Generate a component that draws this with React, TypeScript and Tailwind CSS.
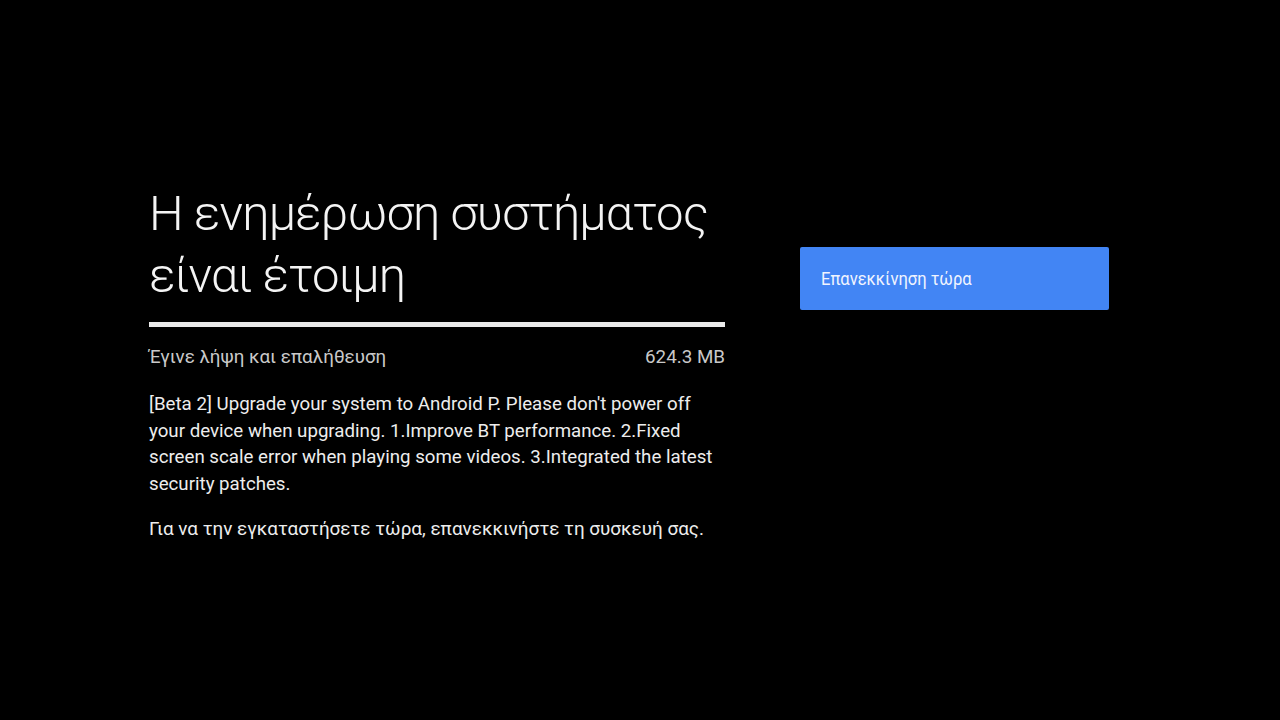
import React from "react";

export default function App() {
  return (
    <div className="w-[1280px] h-[720px] bg-black flex" style={{ fontFamily: "Roboto, 'Noto Sans', sans-serif" }}>
      <div className="flex flex-row pl-[149px] pt-[183px] gap-[75px]">
        <div className="w-[576px] flex flex-col">
          <h1 className="text-[49px] leading-[62px] text-[#f4f4f4] font-light tracking-[-0.9px] whitespace-nowrap" style={{ fontFamily: "Roboto, sans-serif" }}>
            Η ενημέρωση συστήματος
            <br />
            είναι έτοιμη
          </h1>
          <div className="mt-[15px] h-[5px] w-full bg-[#ebebeb]" />
          <div className="mt-[17px] flex justify-between text-[18.8px] leading-[26px] text-[#c9c9c9]">
            <span>Έγινε λήψη και επαλήθευση</span>
            <span>624.3 MB</span>
          </div>
          <p className="mt-[21px] text-[18.7px] leading-[26.7px] text-[#ededed]">
            [Beta 2] Upgrade your system to Android P. Please don't power off your device when upgrading. 1.Improve BT performance. 2.Fixed screen scale error when playing some videos. 3.Integrated the latest security patches.
          </p>
          <p className="mt-[17px] text-[18.9px] leading-[27px] text-[#ededed]">
            Για να την εγκαταστήσετε τώρα, επανεκκινήστε τη συσκευή σας.
          </p>
        </div>
        <div className="pt-[64px]">
          <div className="w-[309px] h-[63px] bg-[#4285f4] rounded-[2px] flex items-center pl-[21px]">
            <span className="text-[18px] text-[#f0f4ff] origin-left scale-x-[0.92] inline-block">Επανεκκίνηση τώρα</span>
          </div>
        </div>
      </div>
    </div>
  );
}
